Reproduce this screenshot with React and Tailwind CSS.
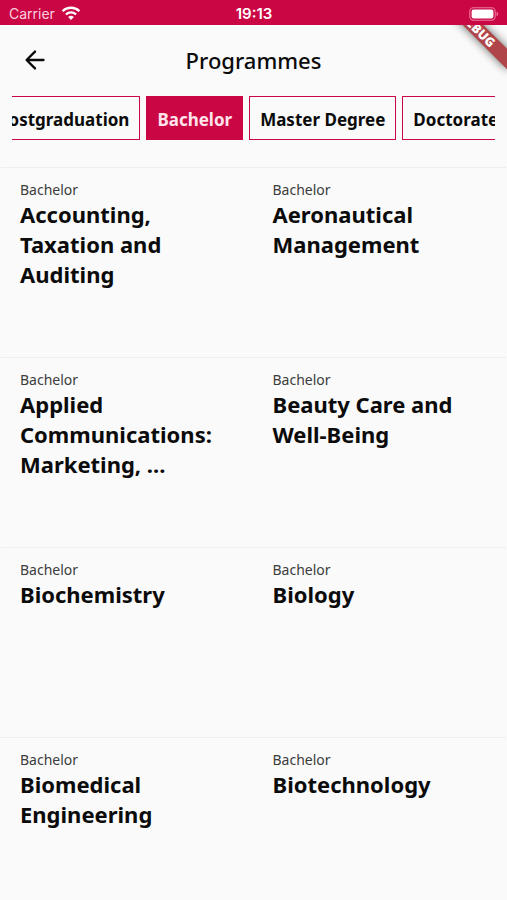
import { useLayoutEffect, useRef, useState } from 'react'

const LEVELS = ['Postgraduation', 'Bachelor', 'Master Degree', 'Doctorate']

const PROGRAMMES = [
  'Accounting, Taxation and Auditing',
  'Aeronautical Management',
  'Applied Communications: Marketing, ...',
  'Beauty Care and Well-Being',
  'Biochemistry',
  'Biology',
  'Biomedical Engineering',
  'Biotechnology',
]

function WifiIcon() {
  return (
    <svg viewBox="0 0 20 15" className="h-[15px] w-5" fill="none" aria-hidden="true">
      <path d="M1.6 5.2a12 12 0 0 1 16.8 0" stroke="#fff" strokeWidth="2.3" />
      <path d="M4.9 8.5a7.4 7.4 0 0 1 10.2 0" stroke="#fff" strokeWidth="2.2" />
      <path d="M10 14l-2.9-2.9a4.2 4.2 0 0 1 5.8 0z" fill="#fff" />
    </svg>
  )
}

function BatteryIcon() {
  return (
    <svg viewBox="0 0 30 14" className="h-[14px] w-[30px]" fill="none" aria-hidden="true">
      <rect x="0.8" y="0.8" width="25.4" height="12.4" rx="3.6" stroke="#ea7a9f" strokeWidth="1.1" />
      <rect x="2.6" y="2.6" width="21.8" height="8.8" rx="1.8" fill="#fff" />
      <path d="M27.6 4.8v4.4c1-.4 1.6-1.2 1.6-2.2s-.6-1.8-1.6-2.2z" fill="#ea7a9f" />
    </svg>
  )
}

function StatusBar() {
  return (
    <div className="relative z-20 grid h-[25px] shrink-0 grid-cols-3 items-center bg-[#cb0644] pt-[2px] pr-2 pl-[9px] font-['Inter',sans-serif] text-sm leading-5 text-white">
      <div className="flex items-center gap-[6px] text-[#fbd0de]">
        <span>Carrier</span>
        <WifiIcon />
      </div>
      <span className="text-center text-[15px] font-semibold">19:13</span>
      <div className="flex justify-end">
        <BatteryIcon />
      </div>
    </div>
  )
}

function DebugBanner() {
  return (
    <svg
      viewBox="0 0 80 80"
      className="pointer-events-none absolute top-0 right-0 z-10 h-20 w-20"
      aria-hidden="true"
    >
      <defs>
        <filter id="banner-shadow" x="-20%" y="-120%" width="140%" height="340%">
          <feGaussianBlur stdDeviation="4.8" />
        </filter>
      </defs>
      <g transform="translate(80 0) rotate(45)">
        <rect x="-49" y="34.5" width="98" height="14.5" fill="#000" opacity="0.6" filter="url(#banner-shadow)" />
        <rect x="-49" y="34.5" width="98" height="14.5" fill="#b04549" />
        <text
          x="0"
          y="46.2"
          textAnchor="middle"
          fill="#fff"
          fontFamily="'Noto Sans', sans-serif"
          fontSize="12.6"
          fontWeight="900"
        >
          DEBUG
        </text>
      </g>
    </svg>
  )
}

function AppBar() {
  return (
    <header className="grid h-[71px] shrink-0 grid-cols-[70px_1fr_70px] items-center pb-[2px]">
      <button type="button" aria-label="Back" className="flex h-12 items-center justify-center">
        <svg viewBox="0 0 24 24" className="size-7" fill="none" stroke="#0b0b0b" strokeWidth="2" strokeLinecap="round" strokeLinejoin="round">
          <path d="M19.3 12H5M12 4.8L4.8 12l7.2 7.2" />
        </svg>
      </button>
      <h1 className="text-center text-[22px] leading-8 font-medium">Programmes</h1>
    </header>
  )
}

function LevelTabs({ active, onSelect }) {
  const stripRef = useRef(null)

  // keep the active level near the left with a peek of the previous one
  useLayoutEffect(() => {
    const strip = stripRef.current
    const tab = strip.querySelector('[aria-pressed="true"]')
    strip.scrollLeft = tab.offsetLeft - strip.offsetLeft - 134
  }, [active])

  return (
    <nav ref={stripRef} className="mx-3 flex shrink-0 gap-1.5 overflow-x-auto [scrollbar-width:none]">
      {LEVELS.map((level) => (
        <button
          key={level}
          type="button"
          aria-pressed={level === active}
          onClick={() => onSelect(level)}
          className={`h-11 shrink-0 border border-[#cb0644] px-[10px] pt-[3px] text-[17px] leading-6 font-bold ${
            level === active ? 'bg-[#cb0644] text-[#ffe3ec]' : 'text-[#0b0b0b]'
          }`}
        >
          {level}
        </button>
      ))}
    </nav>
  )
}

function ProgrammeCard({ level, title }) {
  return (
    <a href="#programme" className="block h-[190px] border-t border-[#eeeeee] pt-[13px] pr-8 pl-[19px]">
      <p className="text-sm leading-[18px] text-[#3c3c3c]">{level}</p>
      <h2 className="text-[22px] leading-[30px] font-bold">{title}</h2>
    </a>
  )
}

function App() {
  const [level, setLevel] = useState('Bachelor')

  return (
    <div className="flex h-screen flex-col overflow-hidden bg-[#fafafa] font-['Noto_Sans',sans-serif] text-[#0b0b0b]">
      <StatusBar />
      <div className="flex min-h-0 flex-1 flex-col">
        <AppBar />
        <LevelTabs active={level} onSelect={setLevel} />
        <main className="mx-px mt-[27px] grid min-h-0 flex-1 auto-rows-min grid-cols-2 overflow-y-auto [scrollbar-width:none]">
          {PROGRAMMES.map((title) => (
            <ProgrammeCard key={title} level="Bachelor" title={title} />
          ))}
        </main>
      </div>
      <DebugBanner />
    </div>
  )
}

export default App
